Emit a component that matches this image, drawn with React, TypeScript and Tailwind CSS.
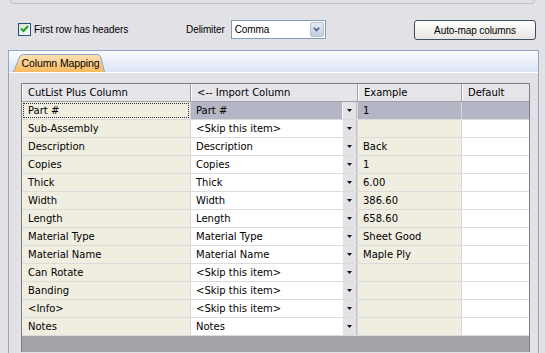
import React from 'react';

const rows: [string, string, string][] = [
  ['Part #', 'Part #', '1'],
  ['Sub-Assembly', '<Skip this item>', ''],
  ['Description', 'Description', 'Back'],
  ['Copies', 'Copies', '1'],
  ['Thick', 'Thick', '6.00'],
  ['Width', 'Width', '386.60'],
  ['Length', 'Length', '658.60'],
  ['Material Type', 'Material Type', 'Sheet Good'],
  ['Material Name', 'Material Name', 'Maple Ply'],
  ['Can Rotate', '<Skip this item>', ''],
  ['Banding', '<Skip this item>', ''],
  ['<Info>', '<Skip this item>', ''],
  ['Notes', 'Notes', ''],
];

const DropButton: React.FC = () => (
  <div className="w-[15px] h-full flex items-center justify-center bg-[#e3e2e7] border-l border-[#f8f8fa] border-r border-r-[#c4c3c9]">
    <svg width="5" height="3" viewBox="0 0 5 3">
      <polygon points="0,0 5,0 2.5,3" fill="#111" />
    </svg>
  </div>
);

export default function App() {
  return (
    <div className="w-[545px] h-[353px] overflow-hidden bg-[#e2e1e6] text-black font-['Liberation_Sans',Arial,sans-serif] text-[10px] tracking-[-0.1px]">
      {/* bottom of the group box above */}
      <div className="mx-[10px] h-[4px] border-b border-x border-[#c4c3c8] rounded-b-[4px]" />

      {/* options row */}
      <div className="flex items-center h-[20px] mt-[15px]">
        <div className="ml-[18px] w-[13px] h-[13px] border border-[#1c5180] bg-gradient-to-br from-[#dcdcd7] to-white flex items-center justify-center">
          <svg width="9" height="8" viewBox="0 0 9 8">
            <path d="M1 3.5 L3.5 6 L8 1" stroke="#21a121" strokeWidth="2" fill="none" />
          </svg>
        </div>
        <span className="ml-[3px]">First row has headers</span>
        <span className="ml-[58px]">Delimiter</span>
        <div className="ml-[6px] w-[95px] h-[19px] border border-[#7f9db9] bg-white flex items-center">
          <span className="flex-1 pl-[3px]">Comma</span>
          <div className="w-[14px] h-[15px] mr-[1px] rounded-[2px] border border-[#b4c2d9] bg-gradient-to-b from-[#e4e8f2] to-[#c4cede] flex items-center justify-center">
            <svg width="7" height="5" viewBox="0 0 7 5">
              <path d="M0.8 0.8 L3.5 3.6 L6.2 0.8" stroke="#4d6185" strokeWidth="1.6" fill="none" />
            </svg>
          </div>
        </div>
        <button className="ml-auto mr-[9px] w-[122px] h-[20px] mt-[2px] rounded-[3px] border border-[#3d4e6b] bg-gradient-to-b from-white to-[#e6e5e0] text-[10px] tracking-[-0.1px] font-['Liberation_Sans',Arial,sans-serif]">
          Auto-map columns
        </button>
      </div>

      {/* tab panel */}
      <div className="ml-[8px] mt-[11px] w-[531px] h-[320px] border border-[#8fa6c9] bg-[#e2e1e6] tracking-normal">
        <div className="h-[22px] bg-gradient-to-b from-[#fbfcfe] to-[#dae4f4] border-b border-white flex items-end pl-[4px]">
          <div className="relative w-[92px] h-[18px] flex items-center justify-center">
            <svg className="absolute inset-0" width="92" height="18" viewBox="0 0 92 18">
              <defs>
                <linearGradient id="tabg" x1="0" y1="0" x2="0" y2="1">
                  <stop offset="0" stopColor="#fde2b4" />
                  <stop offset="1" stopColor="#f8b95e" />
                </linearGradient>
              </defs>
              <path d="M0.5 18 L6.5 3 Q7.8 0.5 10.5 0.5 L84 0.5 Q86.8 0.5 87.8 3 L91.5 18" fill="url(#tabg)" stroke="#8ca3c7" />
            </svg>
            <span className="relative pl-[3px] pt-[1px] text-[10.5px] tracking-[-0.1px]">Column Mapping</span>
          </div>
        </div>

        {/* grid */}
        <div className="ml-[12px] mt-[10px] w-[509px] border-l border-t border-r border-[#7d7d82] font-['DejaVu_Sans',Verdana,sans-serif] text-[10px]">
          <div className="flex h-[18px] bg-[#e6e5ea] border-b border-[#a2a2a6]">
            <div className="w-[169px] pl-[5px] flex items-center border-r border-[#a2a2a6] border-l border-l-white">CutList Plus Column</div>
            <div className="w-[167px] pl-[5px] flex items-center border-r border-[#a2a2a6] border-l border-l-white">&lt;-- Import Column</div>
            <div className="w-[104px] pl-[5px] flex items-center border-r border-[#a2a2a6] border-l border-l-white">Example</div>
            <div className="flex-1 pl-[5px] flex items-center border-l border-l-white">Default</div>
          </div>
          {rows.map((r, i) => {
            const sel = i === 0;
            return (
              <div key={i} className="flex h-[18px] border-b border-[#dbdbdb]">
                <div className="w-[169px] bg-[#f0eee1] border-r border-[#d6d6d6] flex items-center px-[1px]">
                  <div className={`flex-1 h-[15px] flex items-center pl-[4px] ${sel ? 'border border-dotted border-[#333]' : 'border border-transparent'}`}>{r[0]}</div>
                </div>
                <div className={`w-[167px] flex border-r border-[#d6d6d6] ${sel ? 'bg-[#b4b6c6]' : 'bg-white'}`}>
                  <div className="flex-1 pl-[5px] flex items-center">{r[1]}</div>
                  <DropButton />
                </div>
                <div className={`w-[104px] pl-[5px] flex items-center border-r border-[#d6d6d6] ${sel ? 'bg-[#b4b6c6]' : 'bg-[#f0eee1]'}`}>{r[2]}</div>
                <div className={`flex-1 ${sel ? 'bg-[#b4b6c6]' : 'bg-white'}`} />
              </div>
            );
          })}
          <div className="h-[16px] bg-[#a3a3a8]" />
        </div>
      </div>
    </div>
  );
}
